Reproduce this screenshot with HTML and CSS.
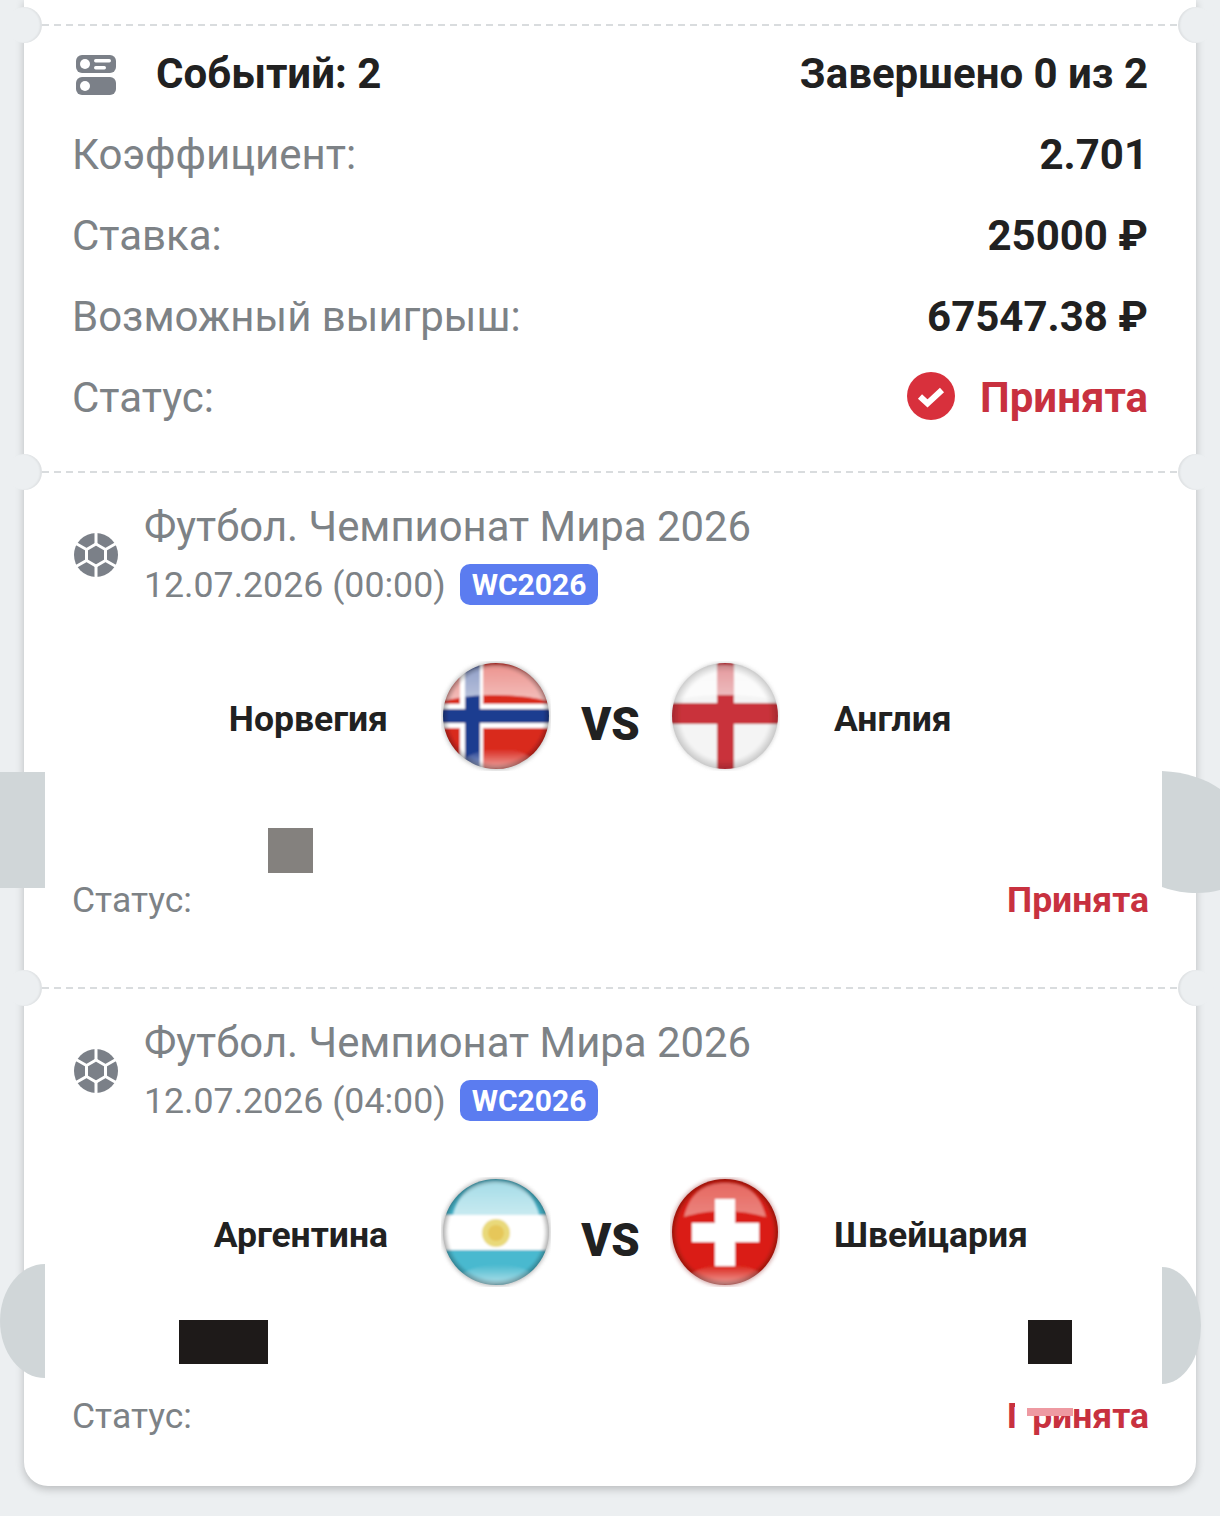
FILE: index.html
```html
<!DOCTYPE html>
<html lang="ru">
<head>
  <meta charset="UTF-8">
  <meta name="viewport" content="width=device-width, initial-scale=1.0">
  <title>Купон</title>
  <link rel="stylesheet" href="styles.css">
</head>
<body>
<svg class="defs" width="0" height="0">
  <defs>
    <clipPath id="disc"><circle cx="55" cy="55" r="53"/></clipPath>
    <linearGradient id="gloss" x1="0" y1="0" x2="0" y2="1">
      <stop offset="0" stop-color="#fff" stop-opacity=".5"/>
      <stop offset="1" stop-color="#fff" stop-opacity=".7"/>
    </linearGradient>
    <linearGradient id="glow" x1="0" y1="0" x2="0" y2="1">
      <stop offset="0" stop-color="#fff" stop-opacity="0"/>
      <stop offset="1" stop-color="#fff" stop-opacity=".6"/>
    </linearGradient>
    <radialGradient id="rim" cx=".5" cy=".5" r=".5">
      <stop offset=".86" stop-color="#000" stop-opacity="0"/>
      <stop offset="1" stop-color="#000" stop-opacity=".4"/>
    </radialGradient>
    <radialGradient id="rimsoft" cx=".5" cy=".5" r=".5">
      <stop offset=".8" stop-color="#000" stop-opacity="0"/>
      <stop offset="1" stop-color="#000" stop-opacity=".22"/>
    </radialGradient>
    <filter id="soft"><feGaussianBlur stdDeviation="1"/></filter>
    <filter id="halo" x="-20%" y="-20%" width="140%" height="140%"><feGaussianBlur stdDeviation="2"/></filter>
    <g id="ball-shape">
      <circle cx="22" cy="22" r="22" fill="#7b8088"/>
      <path d="M22 11L31.500 16.500V27.500L22 33L12.500 27.500V16.500Z" fill="none" stroke="#fff" stroke-width="3"/>
      <path d="M22 11V0M31.500 16.500L42 10.500M31.500 27.500L42 33.500M22 33V44M12.500 27.500L2 33.500M12.500 16.500L2 10.500" stroke="#fff" stroke-width="3"/>
    </g>
  </defs>
</svg>

<div class="ticket">
  <div class="top-strip"></div>
  <div class="cut"></div>

  <section class="summary">
    <div class="row row-head">
      <div class="events">
        <svg class="events-icon" width="40" height="40" viewBox="0 0 40 40">
          <rect x="0" y="0" width="40" height="18" rx="6" fill="#7b8088"/>
          <rect x="0" y="22" width="40" height="18" rx="6" fill="#7b8088"/>
          <circle cx="9" cy="9" r="5" fill="#fff"/>
          <circle cx="9" cy="31" r="5" fill="#fff"/>
          <rect x="18" y="4" width="17" height="3.5" rx="1.7" fill="#fff"/>
          <rect x="18" y="11" width="12" height="3.5" rx="1.7" fill="#fff"/>
        </svg>
        <strong>Событий: 2</strong>
      </div>
      <strong>Завершено 0 из 2</strong>
    </div>
    <div class="row"><span class="label">Коэффициент:</span><strong>2.701</strong></div>
    <div class="row"><span class="label">Ставка:</span><strong>25000 ₽</strong></div>
    <div class="row"><span class="label">Возможный выигрыш:</span><strong>67547.38 ₽</strong></div>
    <div class="row">
      <span class="label">Статус:</span>
      <div class="state">
        <svg class="state-icon" width="48" height="48" viewBox="0 0 48 48">
          <circle cx="24" cy="24" r="24" fill="#d8303c"/>
          <path d="M13 24.500l7.500 7 14.500-13.500" fill="none" stroke="#fff" stroke-width="6"/>
        </svg>
        <strong class="accepted">Принята</strong>
      </div>
    </div>
  </section>
  <div class="cut"></div>

  <section class="match">
    <div class="match-head">
      <svg class="ball" width="44" height="44" viewBox="0 0 44 44"><use href="#ball-shape"/></svg>
      <div>
        <div class="sport">Футбол. Чемпионат Мира 2026</div>
        <div class="when">12.07.2026 (00:00) <span class="badge">WC2026</span></div>
      </div>
    </div>
    <div class="teams">
      <div class="team team-home">Норвегия</div>
      <svg class="flag" width="110" height="110" viewBox="0 0 110 110">
        <circle cx="55" cy="55" r="54" fill="#999" opacity=".6" filter="url(#halo)"/>
        <g clip-path="url(#disc)"><g filter="url(#soft)">
          <rect width="110" height="110" fill="#d9291f"/>
          <rect x="19" width="23" height="110" fill="#fff"/>
          <rect y="43" width="110" height="24" fill="#fff"/>
          <rect x="24" width="15" height="110" fill="#1f3d90"/>
          <rect y="48" width="110" height="14" fill="#1f3d90"/>
          <path d="M4 40C12 14 30 4 55 4S98 14 106 40C80 32 30 32 4 40Z" fill="url(#gloss)"/>
          <path d="M20 100C40 84 75 84 92 98C78 110 36 112 20 100Z" fill="url(#glow)"/>
          <circle cx="55" cy="55" r="55" fill="url(#rim)"/>
        </g></g>
      </svg>
      <div class="vs">VS</div>
      <svg class="flag" width="110" height="110" viewBox="0 0 110 110">
        <circle cx="55" cy="55" r="53" fill="#aaa" opacity=".6" filter="url(#halo)"/>
        <g clip-path="url(#disc)"><g filter="url(#soft)">
          <rect width="110" height="110" fill="#f4f4f4"/>
          <rect x="47" width="17" height="110" fill="#c9333a"/>
          <rect y="42" width="110" height="21" fill="#c9333a"/>
          <path d="M4 40C12 14 30 4 55 4S98 14 106 40C80 32 30 32 4 40Z" fill="url(#gloss)"/>
          <circle cx="55" cy="55" r="55" fill="url(#rimsoft)"/>
        </g></g>
      </svg>
      <div class="team team-away">Англия</div>
    </div>
    <div class="row row-status">
      <span class="label">Статус:</span>
      <strong class="accepted">Принята</strong>
    </div>
    <div class="patch patch-left-a"></div>
    <svg class="patch-right-a" width="58" height="124" viewBox="0 0 58 124">
      <path d="M0 0C24 1 44 8 58 18V119C44 123 22 124 0 116Z" fill="#d0d6d8"/>
    </svg>
    <div class="patch patch-grey"></div>
  </section>
  <div class="cut"></div>

  <section class="match match-last">
    <div class="match-head">
      <svg class="ball" width="44" height="44" viewBox="0 0 44 44"><use href="#ball-shape"/></svg>
      <div>
        <div class="sport">Футбол. Чемпионат Мира 2026</div>
        <div class="when">12.07.2026 (04:00) <span class="badge">WC2026</span></div>
      </div>
    </div>
    <div class="teams">
      <div class="team team-home">Аргентина</div>
      <svg class="flag" width="110" height="110" viewBox="0 0 110 110">
        <circle cx="55" cy="55" r="54" fill="#888" opacity=".6" filter="url(#halo)"/>
        <g clip-path="url(#disc)"><g filter="url(#soft)">
          <rect width="110" height="110" fill="#49b9cf"/>
          <rect y="38" width="110" height="35" fill="#fff"/>
          <circle cx="55" cy="56" r="14" fill="#e9d97a"/>
          <circle cx="55" cy="56" r="8" fill="#e6c75a"/>
          <path d="M12 38C18 14 34 4 55 4S92 14 98 38Z" fill="url(#gloss)"/>
          <path d="M16 100C36 84 75 84 94 98C78 110 36 112 16 100Z" fill="url(#glow)"/>
          <circle cx="55" cy="55" r="55" fill="url(#rim)"/>
        </g></g>
      </svg>
      <div class="vs">VS</div>
      <svg class="flag" width="110" height="110" viewBox="0 0 110 110">
        <circle cx="55" cy="55" r="54" fill="#a55" opacity=".55" filter="url(#halo)"/>
        <g clip-path="url(#disc)"><g filter="url(#soft)">
          <rect width="110" height="110" fill="#da1f14"/>
          <path d="M14 40C20 16 34 6 55 6S90 16 96 40C70 32 38 32 14 40Z" fill="url(#gloss)" opacity=".65"/>
          <path d="M16 100C36 84 75 84 94 98C78 110 36 112 16 100Z" fill="url(#glow)"/>
          <rect x="45" y="22" width="20" height="67" fill="#fff"/>
          <rect x="22" y="46" width="67" height="19" fill="#fff"/>
          <circle cx="55" cy="55" r="55" fill="url(#rim)"/>
        </g></g>
      </svg>
      <div class="team team-away">Швейцария</div>
    </div>
    <div class="row row-status">
      <span class="label">Статус:</span>
      <strong class="accepted">Принята</strong>
    </div>
    <div class="patch patch-left-b"></div>
    <div class="patch patch-right-b"></div>
    <div class="patch patch-black-wide"></div>
    <div class="patch patch-black-square"></div>
    <div class="patch patch-erase"></div>
    <div class="patch patch-pink"></div>
  </section>
</div>
</body>
</html>
```

FILE: styles.css
```css
html, body {
  margin: 0;
  padding: 0;
}
body {
  width: 1220px;
  height: 1516px;
  overflow: hidden;
  background-color: #eceff1;
  font-family: Roboto, "Liberation Sans", sans-serif;
  color: #212121;
}
.defs {
  position: absolute;
}
.ticket {
  margin: 0 24px;
  background-color: #fff;
  border-radius: 0 0 24px 24px;
  box-shadow: 0 3px 8px rgba(0, 0, 0, 0.22);
}
.top-strip {
  height: 24px;
}

/* dashed tear line with round notches at both ends */
.cut {
  position: relative;
  height: 2px;
  margin: 0 18px;
  background: repeating-linear-gradient(90deg, #d9dcde 0 7px, transparent 7px 12px);
}
.cut::before, .cut::after {
  content: "";
  position: absolute;
  top: -17px;
  width: 36px;
  height: 36px;
  border-radius: 50%;
  background-color: #eceff1;
}
.cut::before {
  left: -36px;
  box-shadow: inset -2px 0 2px rgba(0, 0, 0, 0.06);
}
.cut::after {
  right: -36px;
  box-shadow: inset 2px 0 2px rgba(0, 0, 0, 0.06);
}

.summary {
  padding: 7px 48px 33px;
}
.row {
  display: flex;
  justify-content: space-between;
  align-items: center;
  height: 81px;
  font-size: 42px;
}
.row strong {
  font-weight: 700;
}
.label {
  color: #7d8286;
}
.events {
  display: flex;
  align-items: center;
  gap: 40px;
  padding-left: 4px;
}
.events-icon {
  margin-top: 3px;
}
.state {
  display: flex;
  align-items: center;
  gap: 25px;
}
.state-icon {
  margin-top: -4px;
}
.accepted {
  color: #c8313f;
}

.match {
  position: relative;
  padding: 25px 48px 62px;
}
.match-last {
  padding-bottom: 45px;
}
.match-head {
  display: flex;
  align-items: center;
  gap: 26px;
  padding-left: 2px;
}
.ball {
  flex: none;
  margin-top: -2px;
}
.sport {
  height: 58px;
  line-height: 58px;
  font-size: 41.85px;
  color: #7d8286;
}
.when {
  display: flex;
  align-items: center;
  gap: 14px;
  height: 58px;
  font-size: 35.7px;
  color: #7d8286;
}
.badge {
  margin-top: -2px;
  padding: 0 12px;
  height: 41px;
  line-height: 41px;
  border-radius: 10px;
  background-color: #5b7cf0;
  color: #fff;
  font-size: 30px;
  font-weight: 700;
}

.teams {
  display: flex;
  align-items: center;
  height: 110px;
  margin-top: 47px;
}
.team {
  font-size: 35.5px;
  font-weight: 700;
  margin-top: 6px;
}
.team-home {
  width: 316px;
  margin-right: 53px;
  text-align: right;
}
.team-away {
  margin-left: 54px;
}
.vs {
  width: 119px;
  text-align: center;
  margin-top: 17px;
  font-size: 45.5px;
  font-weight: 900;
}
.row-status {
  height: 50px;
  margin-top: 104px;
  font-size: 35.5px;
}
.row-status .accepted {
  margin-right: -1px;
}

/* blocks pasted over the screenshot */
.patch, .patch-right-a {
  position: absolute;
}
.patch-left-a {
  left: -24px;
  top: 299px;
  width: 45px;
  height: 116px;
  background-color: #d0d6d8;
}
.patch-right-a {
  left: 1138px;
  top: 298px;
}
.patch-grey {
  left: 244px;
  top: 355px;
  width: 45px;
  height: 45px;
  background-color: #84817e;
}
.patch-left-b {
  left: -24px;
  top: 275px;
  width: 45px;
  height: 114px;
  border-radius: 100% 0 0 100% / 50% 0 0 50%;
  background-color: #d0d6d8;
}
.patch-right-b {
  left: 1138px;
  top: 278px;
  width: 39px;
  height: 117px;
  border-radius: 0 100% 100% 0 / 0 50% 50% 0;
  background-color: #d0d6d8;
}
.patch-black-wide {
  left: 155px;
  top: 331px;
  width: 89px;
  height: 44px;
  background-color: #1e1a19;
}
.patch-black-square {
  left: 1004px;
  top: 331px;
  width: 44px;
  height: 44px;
  background-color: #1e1a19;
}
.patch-erase {
  left: 991px;
  top: 411px;
  width: 17px;
  height: 30px;
  background-color: #fff;
}
.patch-pink {
  left: 1003px;
  top: 419px;
  width: 46px;
  height: 8px;
  background-color: #ee9aa2;
}
```
